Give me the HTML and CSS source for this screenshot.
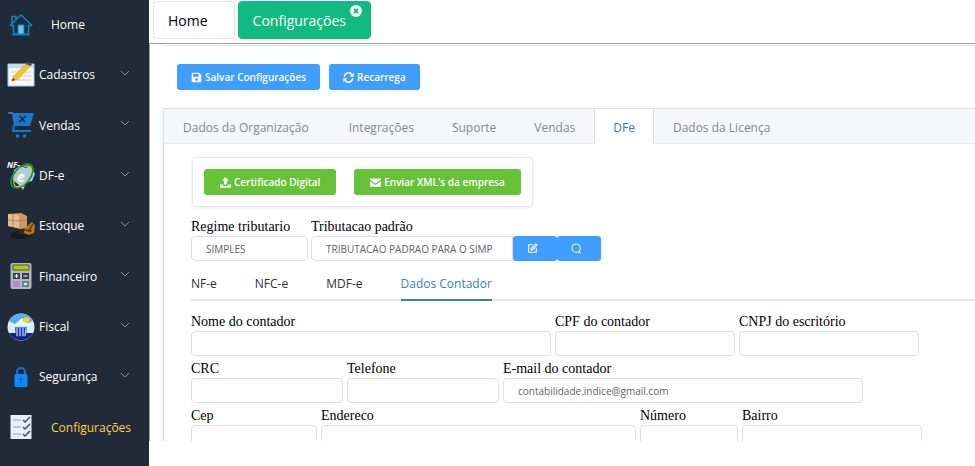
FILE: index.html
```html
<!DOCTYPE html>
<html lang="pt-BR">
<head>
<meta charset="utf-8">
<title>Configurações</title>
<link rel="stylesheet" href="styles.css">
</head>
<body>
<div class="app">
  <nav class="sidebar">
    <a class="item" href="#">
      <svg class="pic" viewBox="0 0 28 28"><g fill="none" stroke="#0b84c6" stroke-width="1.6"><path d="M3 14.5 14 4l11 10.500M3 14.500h3.500V23h15v-8.500H25M5 12V5.500h4v3"/></g><path d="M11 14h6v9h-6z" fill="#6fc0ee" stroke="#0b84c6"/><path d="M5 24h18" stroke="#0b84c6"/></svg>
      <span class="text wide">Home</span>
    </a>
    <a class="item" href="#">
      <svg class="pic" viewBox="0 0 28 28"><path d="M1 3h26v22H1z" fill="#f6f7f9" stroke="#a9cdf0"/><path d="M1 3h26v4H1z" fill="#b9dcfa"/><path d="M4 11h20M4 15h20M4 19h20" stroke="#c9cbd1"/><path d="m5 20 2-5L20 2l4 2L11 18z" fill="#f7c51c" stroke="#d59a0a" stroke-width=".6"/><path d="m19 3 2-2 4 2-1.500 2z" fill="#5c4a33"/><path d="m5 20 1-3 2 2z" fill="#3a3430"/></svg>
      <span class="text">Cadastros</span>
      <svg class="chev" viewBox="0 0 10 6"><path d="m1 1 4 4 4-4"/></svg>
    </a>
    <a class="item" href="#">
      <svg class="pic" viewBox="0 0 28 28"><path d="M1 2h26l-4 13H7L5 3H1z" fill="#1a77c9"/><path d="M1 2h5M7 14l-1 6h18" fill="none" stroke="#1a77c9" stroke-width="2"/><path d="m12 11 7-6M13 5l5 6" stroke="#202a38" stroke-width="1.600"/><circle cx="10.500" cy="25" r="1.800" fill="#1a77c9"/><circle cx="17.500" cy="25" r="1.800" fill="#1a77c9"/></svg>
      <span class="text">Vendas</span>
      <svg class="chev" viewBox="0 0 10 6"><path d="m1 1 4 4 4-4"/></svg>
    </a>
    <a class="item" href="#">
      <svg class="pic" viewBox="0 0 28 28"><path d="m7 8 6-4 5 2 6-2 4 8-3 7-6 2-3 7-4-5-6-5z" fill="#a9cdf5"/><g fill="none" stroke-width="1.800"><ellipse cx="15" cy="14" rx="8" ry="14" transform="rotate(40 15 14)" stroke="#179447"/><ellipse cx="15.500" cy="14" rx="6" ry="12" transform="rotate(36 15 14)" stroke="#d9d02c" stroke-width="1.200"/></g><text x="10" y="20" class="nfe-e">e</text><text x="0" y="6" class="nfe-n">NF-</text></svg>
      <span class="text">DF-e</span>
      <svg class="chev" viewBox="0 0 10 6"><path d="m1 1 4 4 4-4"/></svg>
    </a>
    <a class="item" href="#">
      <svg class="pic" viewBox="0 0 28 28"><ellipse cx="14" cy="23" rx="11" ry="4" fill="#151b23"/><path d="m1 2 13-1 6 3v12l-7 1-12-3z" fill="#c99a66"/><path d="m1 2 11 1v13L1 14z" fill="#e7bd88"/><path d="m1 8 11 1 8-1M6 2v13" fill="none" stroke="#a87b4b" stroke-width=".8"/><path d="M12 17v5l6 1 2-6z" fill="#38281a"/><path d="m18 16 7-6 3 3-1 8-5 2-5-2z" fill="#b77a16"/><path d="m21 20 5-8m-8 6 7 1" stroke="#5a3a0d" stroke-width="1.500"/></svg>
      <span class="text">Estoque</span>
      <svg class="chev" viewBox="0 0 10 6"><path d="m1 1 4 4 4-4"/></svg>
    </a>
    <a class="item" href="#">
      <svg class="pic" viewBox="0 0 28 28"><rect x="3.500" y="1" width="21" height="26" rx="2" fill="#aeb9c1"/><path d="M6 3h16v5H6z" fill="#b8c818" stroke="#4d5a25"/><path d="M6 11h7v6H6zm9 0h7v6h-7z" fill="#343e48"/><path d="M7.500 14h4m-2-2v4m7-2h4" stroke="#fff" stroke-width="1.200"/><path d="M6 19h7v6H6z" fill="#b48ad5"/><path d="M15 19h7v6h-7z" fill="#6c8290"/><path d="M17 21h3v2h-3z" fill="#e8eef2"/></svg>
      <span class="text">Financeiro</span>
      <svg class="chev" viewBox="0 0 10 6"><path d="m1 1 4 4 4-4"/></svg>
    </a>
    <a class="item" href="#">
      <svg class="pic" viewBox="0 0 28 28"><circle cx="14" cy="14" r="13.500" fill="#d9f0fc"/><path d="M2 8a13.500 13.500 0 0 1 24 0l-8 3H8z" fill="#58aee9"/><path d="M2 20h24a13.500 13.500 0 0 1-24 0z" fill="#10238a"/><path d="m6 13 9-8 8 8z" fill="#e6f5fd"/><path d="m15 8 3-4 5 1-1 4-4 1z" fill="#f5d23b"/><path d="M8 14h12l-1 10H9z" fill="#1a3aa2"/><path d="M10 15v8m3-8v8m3-8v8m3-8-1 8M7 14h14" stroke="#b5dcf7" stroke-width="1.200"/></svg>
      <span class="text">Fiscal</span>
      <svg class="chev" viewBox="0 0 10 6"><path d="m1 1 4 4 4-4"/></svg>
    </a>
    <a class="item" href="#">
      <svg class="pic" viewBox="0 0 28 28"><path d="M10 12V9a4 4 0 0 1 8 0v3" fill="none" stroke="#0c74d4" stroke-width="2"/><rect x="7.500" y="11" width="13" height="13" rx="1.500" fill="#0a8cff"/><path d="M14 16v4" stroke="#0758ab" stroke-width="1.500"/><circle cx="14" cy="16" r="1.500" fill="#0758ab"/></svg>
      <span class="text">Segurança</span>
      <svg class="chev" viewBox="0 0 10 6"><path d="m1 1 4 4 4-4"/></svg>
    </a>
    <a class="item current" href="#">
      <svg class="pic" viewBox="0 0 28 28"><path d="M3.500 2h21v24h-21z" fill="#e9eff8"/><path d="M6 7h8M6 14h8M6 21h8" stroke="#a9bddb" stroke-width="1.500"/><path d="m16 7 2 2 5-5m-7 10 2 2 5-5m-7 10 2 2 5-5" fill="none" stroke="#33527f" stroke-width="1.500"/></svg>
      <span class="text wide">Configurações</span>
    </a>
  </nav>

  <main class="main">
    <header class="windows">
      <button class="win" type="button">Home</button>
      <button class="win open" type="button">Configurações
        <svg class="close" viewBox="0 0 12 12"><circle cx="6" cy="6" r="6" fill="#fff"/><path d="m4 4 4 4m0-4L4 8" stroke="#12b981" stroke-width="1.800"/></svg>
      </button>
    </header>
    <section class="panel">
      <div class="toolbar">
        <button class="btn blue" type="button"><svg class="ico" viewBox="0 0 16 16"><path fill="currentColor" fill-rule="evenodd" d="M2.500 1h9L15 4.500v9a1.500 1.500 0 0 1-1.500 1.500h-11A1.500 1.500 0 0 1 1 13.500v-11A1.500 1.500 0 0 1 2.500 1zM3 3v4h8V3zm5 6a2 2 0 1 0 0 4 2 2 0 0 0 0-4z"/></svg>Salvar Configurações</button>
        <button class="btn blue" type="button"><svg class="ico" viewBox="0 0 16 16"><path d="M2 7a6 6 0 0 1 11-3M14 9a6 6 0 0 1-11 3" fill="none" stroke="currentColor" stroke-width="2.200"/><path d="M15.500 1v6h-6zM.500 15V9h6z" fill="currentColor"/></svg>Recarrega</button>
      </div>
      <div class="card">
        <div class="tabs" role="tablist">
          <button class="tab" type="button" role="tab">Dados da Organização</button>
          <button class="tab" type="button" role="tab">Integrações</button>
          <button class="tab" type="button" role="tab">Suporte</button>
          <button class="tab" type="button" role="tab">Vendas</button>
          <button class="tab on" type="button" role="tab" aria-selected="true">DFe</button>
          <button class="tab" type="button" role="tab">Dados da Licença</button>
        </div>
        <div class="body">
          <div class="actions">
            <button class="btn green" type="button"><svg class="ico" viewBox="0 0 16 16"><path fill="currentColor" d="m8 0 5 5.500h-3V11H6V5.500H3zM0 11h4.500v2h7v-2H16v4.500H0z"/></svg>Certificado Digital</button>
            <button class="btn green" type="button"><svg class="ico" viewBox="0 0 16 16"><path fill="currentColor" d="M0 2h16v2L8 9.500 0 4zM0 6l8 5.500L16 6v8H0z"/></svg>Enviar XML's da empresa</button>
          </div>
          <div class="row tax">
            <div class="field regime"><label for="regime">Regime tributario</label><input id="regime" value="SIMPLES"></div>
            <div class="field padrao"><label for="padrao">Tributacao padrão</label>
              <div class="group"><input id="padrao" value="TRIBUTACAO PADRAO PARA O SIMP">
                <button class="btn blue add" type="button" aria-label="Editar"><svg class="ico" viewBox="0 0 16 16"><path d="M9 2.500H2.500v11h11V7M6 10V8l7-6.500 1.500 1.500L8 10z" fill="none" stroke="currentColor" stroke-width="1.500"/></svg></button>
                <button class="btn blue add" type="button" aria-label="Pesquisar"><svg class="ico" viewBox="0 0 16 16"><path d="M13.500 7.500a6 6 0 1 1-12 0 6 6 0 0 1 12 0zM11 12l3 3" fill="none" stroke="currentColor" stroke-width="1.500"/></svg></button>
              </div>
            </div>
          </div>
          <div class="subtabs" role="tablist">
            <button class="subtab" type="button" role="tab">NF-e</button>
            <button class="subtab" type="button" role="tab">NFC-e</button>
            <button class="subtab" type="button" role="tab">MDF-e</button>
            <button class="subtab on" type="button" role="tab" aria-selected="true">Dados Contador</button>
          </div>
          <div class="form">
            <div class="row">
              <div class="field xl"><label for="nome">Nome do contador</label><input id="nome"></div>
              <div class="field md"><label for="cpf">CPF do contador</label><input id="cpf"></div>
              <div class="field md"><label for="cnpj">CNPJ do escritório</label><input id="cnpj"></div>
            </div>
            <div class="row">
              <div class="field sm"><label for="crc">CRC</label><input id="crc"></div>
              <div class="field sm"><label for="tel">Telefone</label><input id="tel"></div>
              <div class="field xl"><label for="email">E-mail do contador</label><input id="email" value="contabilidade.indice@gmail.com"></div>
            </div>
            <div class="row">
              <div class="field cep"><label for="cep">Cep</label><input id="cep"></div>
              <div class="field lg"><label for="end">Endereco</label><input id="end"></div>
              <div class="field xs"><label for="num">Número</label><input id="num"></div>
              <div class="field md"><label for="bairro">Bairro</label><input id="bairro"></div>
            </div>
          </div>
        </div>
      </div>
    </section>
  </main>
</div>
</body>
</html>
```
FILE: styles.css
```css
* { box-sizing: border-box; }
body { margin: 0; background: #fff; font-family: "Open Sans", "Noto Sans", sans-serif; }
button, input { margin: 0; font-family: inherit; }
button { cursor: pointer; }

.app { display: flex; height: 100vh; overflow: hidden; }

.sidebar { flex: 0 0 149px; display: flex; flex-direction: column; padding-bottom: 13px; background: #202a38; }
.item { flex: 1; display: flex; align-items: center; padding: 0 19px 1px 7px; color: #fff; font-size: 12px; text-decoration: none; }
.pic { width: 28px; height: 28px; margin-right: 4px; overflow: visible; }
.text { flex: 1; white-space: nowrap; }
.wide { padding-left: 12px; }
.current { color: #ffd04b; padding-right: 0; }
.chev { width: 10px; height: 6px; margin-bottom: 4px; fill: none; stroke: #8a9099; }
.nfe-e { font: italic bold 14px "Open Sans", sans-serif; fill: #fff; }
.nfe-n { font: italic bold 8px "Open Sans", sans-serif; fill: #fff; }

.main { flex: 1; min-width: 0; display: flex; flex-direction: column; padding-bottom: 25px; }
.windows { display: flex; gap: 3px; padding: 1px 4px 4px; }
.win { position: relative; height: 38px; padding: 0 26px 0 14px; border: 1px solid #e4e4e7; border-radius: 4px; background: #fff; color: #000; font-size: 14px; }
.open { padding-right: 24px; background: #12b981; border-color: #12b981; color: #fff; }
.close { position: absolute; top: 3px; right: 8px; width: 12px; height: 12px; }

.panel { flex: 1; min-height: 0; overflow: hidden; padding: 1px 0 0 13px; border: solid #a0a0a0; border-width: 1px 0 0 1px; }
.toolbar { display: flex; gap: 9px; padding: 18px 14px; border-top: 1px solid #e4e4e7; }
.btn { display: inline-flex; align-items: center; justify-content: center; gap: 3px; height: 26px; padding: 0 14px; border: 0; border-radius: 3px; color: #fff; font-size: 10px; font-weight: 600; white-space: nowrap; }
.blue { background: #409eff; }
.green { padding: 0 16px; background: #67c23a; }
.ico { width: 11px; height: 11px; }

.card { border: solid #dcdfe6; border-width: 1px 0 0 1px; box-shadow: 0 2px 4px rgba(0, 0, 0, .12); }
.tabs { display: flex; background: #f5f7fa; border-bottom: 1px solid #e4e7ed; }
.tab { height: 35px; margin-bottom: -1px; padding: 2px 18px 0; border: solid transparent; border-width: 0 1px; background: none; color: #85888e; font-size: 12px; font-weight: 500; white-space: nowrap; }
.tab:first-child { padding-right: 20px; }
.tab.on { background: #fff; border-color: #dcdfe6; color: #3a7bc8; }

.body { padding: 13px 0 20px 27px; }
.actions { display: inline-flex; gap: 18px; margin-left: 1px; padding: 11px; border: 1px solid #e6e8ee; border-radius: 4px; box-shadow: 0 1px 3px rgba(0, 0, 0, .08); }
.row { display: flex; gap: 4px; margin-bottom: 4px; }
.tax { gap: 3px; margin-top: 11px; }
.field { display: flex; flex-direction: column; flex: 0 0 auto; }
.field label { font-family: "Liberation Serif", serif; font-size: 14px; line-height: 18px; color: #000; white-space: nowrap; }
.field input { width: 100%; height: 25px; padding: 0 14px; border: 1px solid #dcdfe6; border-radius: 4px; background: #fff; color: #606266; font-size: 10px; }
.xl { width: 360px; }
.lg { width: 315px; }
.md { width: 180px; }
.sm { width: 152px; }
.cep { width: 126px; }
.xs { width: 98px; }
.regime { width: 117px; }
.padrao { width: 290px; }
.group { display: flex; }
.group input { flex: 1; min-width: 0; border-radius: 4px 0 0 4px; }
.add { flex: 0 0 44px; height: 25px; padding: 0 5px 0 0; }

.subtabs { display: flex; gap: 38px; margin: 8px 0 12px; border-bottom: 2px solid #e4e7ed; }
.subtab { height: 32px; margin-bottom: -2px; padding: 0 0 2px; border: 0; border-bottom: 2px solid transparent; background: none; color: #303133; font-size: 12px; font-weight: 500; }
.subtab.on { color: #3a7bc8; border-color: #3a7bc8; }
```
